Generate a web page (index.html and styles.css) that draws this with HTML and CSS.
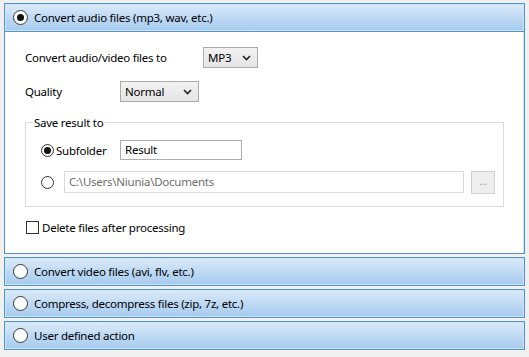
FILE: index.html
```html
<!DOCTYPE html>
<html lang="en">

<head>
  <meta charset="UTF-8" />
  <meta name="viewport" content="width=device-width, initial-scale=1.0" />
  <title>Processing actions</title>
  <link rel="stylesheet" href="styles.css">
</head>

<body>
  <div class="accordion">
    <div class="section open">
      <div class="section-head"><span class="radio big checked"></span>Convert audio files (mp3, wav, etc.)</div>
      <div class="section-body">
        <div class="row">
          <span class="label wide">Convert audio/video files to</span>
          <div class="combo combo-short"><span>MP3</span>
            <svg class="chev" width="9" height="6" viewBox="0 0 9 6"><path d="M1 1 L4.5 4.5 L8 1" fill="none" stroke="#222" stroke-width="1.6" /></svg>
          </div>
        </div>
        <div class="row">
          <span class="label">Quality</span>
          <div class="combo combo-long"><span>Normal</span>
            <svg class="chev" width="9" height="6" viewBox="0 0 9 6"><path d="M1 1 L4.5 4.5 L8 1" fill="none" stroke="#222" stroke-width="1.6" /></svg>
          </div>
        </div>

        <fieldset class="group">
          <legend>Save result to</legend>
          <div class="group-row">
            <span class="radio checked"></span>
            <span class="radio-label">Subfolder</span>
            <div class="field field-result">Result</div>
          </div>
          <div class="group-row">
            <span class="radio"></span>
            <div class="field field-path">C:\Users\Niunia\Documents</div>
            <div class="browse">...</div>
          </div>
        </fieldset>

        <div class="check-row">
          <span class="checkbox"></span>Delete files after processing
        </div>
      </div>
    </div>

    <div class="section">
      <div class="section-head"><span class="radio big"></span>Convert video files (avi, flv, etc.)</div>
    </div>
    <div class="section">
      <div class="section-head"><span class="radio big"></span>Compress, decompress files (zip, 7z, etc.)</div>
    </div>
    <div class="section">
      <div class="section-head"><span class="radio big"></span>User defined action</div>
    </div>
  </div>
</body>

</html>
```

FILE: styles.css
```css
body {
  margin: 0;
  background-color: #f0f0f0;
  font-family: "Noto Sans", "Open Sans", sans-serif;
  font-size: 11.5px;
  letter-spacing: -0.25px;
  color: #000;
}

.accordion {
  width: 521px;
  padding: 3px 4px;
  display: flex;
  flex-direction: column;
  gap: 3px;
}

.section-head {
  height: 27px;
  display: flex;
  align-items: center;
  padding-left: 8px;
  border: 1px solid #4e93d3;
  box-shadow: inset 0 0 0 1px #cfe3f6;
  background: linear-gradient(#dcebf9, #bcd8f3 55%, #a6cbee);
}

.section-head .radio {
  margin-right: 6px;
}

.section-body {
  background-color: #fff;
  border: 1px solid #4e93d3;
  border-top: none;
  box-shadow: inset -1px 0 0 #cfe3f6;
  padding: 15px 20px 0 20px;
  box-sizing: border-box;
  height: 222px;
}

.row {
  display: flex;
  align-items: center;
  height: 21px;
  margin-bottom: 13px;
}

.label {
  width: 95px;
}

.label.wide {
  width: 178px;
}

.combo {
  height: 19px;
  border: 1px solid #acacac;
  background: linear-gradient(#f2f2f2, #e5e5e5);
  display: flex;
  align-items: center;
  justify-content: space-between;
  padding: 0 6px 0 4px;
  box-sizing: content-box;
}

.combo-short {
  width: 43px;
}

.combo-long {
  width: 67px;
}

.group {
  margin: 1px 0 0 0;
  padding: 9px 8px 9px 15px;
  border: 1px solid #dcdcdc;
  width: 478px;
  box-sizing: border-box;
  height: 92px;
}

.group legend {
  padding: 0 2px;
  margin-left: -9px;
}

.group-row {
  display: flex;
  align-items: center;
  height: 22px;
  margin-bottom: 10px;
}

.radio-label {
  margin-left: 2px;
  width: 64px;
}

.field {
  height: 18px;
  line-height: 18px;
  border: 1px solid #abadb3;
  padding: 0 4px;
}

.field-result {
  width: 112px;
}

.field-path {
  margin-left: 10px;
  width: 390px;
  height: 20px;
  line-height: 20px;
  border-color: #d9d9d9;
  color: #6d6d6d;
}

.browse {
  margin-left: 7px;
  width: 22px;
  height: 21px;
  border: 1px solid #d0d0d0;
  background-color: #eeeeee;
  color: #999;
  font-size: 10px;
  text-align: center;
  line-height: 18px;
}

.radio {
  width: 11px;
  height: 11px;
  border: 1px solid #333;
  border-radius: 50%;
  background-color: #fff;
  position: relative;
  flex: none;
}

.radio.big {
  width: 13px;
  height: 13px;
  border-color: #3a3a3a;
}

.radio.checked::after {
  content: "";
  position: absolute;
  left: 2px;
  top: 2px;
  width: 7px;
  height: 7px;
  border-radius: 50%;
  background-color: #111;
}

.radio.big.checked::after {
  left: 3px;
  top: 3px;
}

.check-row {
  display: flex;
  align-items: center;
  margin-top: 13px;
  margin-left: 1px;
}

.checkbox {
  width: 11px;
  height: 11px;
  border: 1px solid #333;
  background-color: #fff;
  margin-right: 3px;
}
```
